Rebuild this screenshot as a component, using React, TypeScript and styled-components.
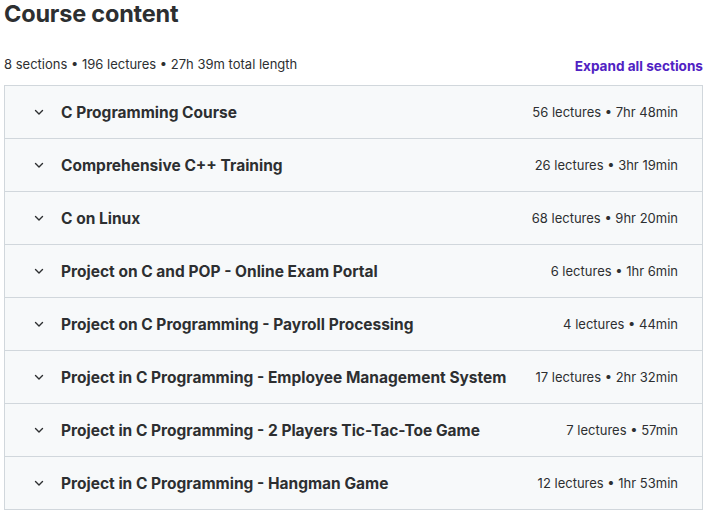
import React from "react";
import styled, { createGlobalStyle } from "styled-components";

const Global = createGlobalStyle`
  html, body { margin: 0; padding: 0; background: #ffffff; }
  body { font-family: Inter, "Noto Sans", sans-serif; color: #2d2f31; }
`;

const Page = styled.div`
  padding: 0 6px 0 4px;
`;

const Heading = styled.h2`
  margin: 0;
  font-size: 23.5px;
  line-height: 28px;
  font-weight: 700;
  letter-spacing: -0.2px;
  color: #2d2f31;
`;

const StatsBar = styled.div`
  display: flex;
  justify-content: space-between;
  align-items: center;
  margin-top: 24px;
  margin-bottom: 9px;
  height: 24px;
`;

const Stats = styled.span`
  font-size: 13px;
  color: #2d2f31;
`;

const ExpandLink = styled.button`
  border: none;
  background: none;
  padding: 0;
  margin-top: 3px;
  font-family: inherit;
  font-size: 13.6px;
  font-weight: 700;
  color: #5022c3;
  cursor: pointer;
`;

const List = styled.div`
  border: 1px solid #d1d7dc;
  border-bottom: none;
`;

const Row = styled.div`
  display: flex;
  align-items: center;
  height: 52px;
  padding: 0 24px 0 28px;
  background: #f7f9fa;
  border-bottom: 1px solid #d1d7dc;
`;

const Chevron = styled.span`
  display: flex;
  width: 12px;
  height: 12px;
  margin-right: 16px;
  color: #2d2f31;
`;

const Title = styled.span`
  flex: 1;
  font-size: 15.5px;
  font-weight: 700;
  color: #2d2f31;
`;

const Meta = styled.span`
  font-size: 13px;
  color: #2d2f31;
`;

const sections = [
  ["C Programming Course", "56 lectures • 7hr 48min"],
  ["Comprehensive C++ Training", "26 lectures • 3hr 19min"],
  ["C on Linux", "68 lectures • 9hr 20min"],
  ["Project on C and POP - Online Exam Portal", "6 lectures • 1hr 6min"],
  ["Project on C Programming - Payroll Processing", "4 lectures • 44min"],
  ["Project in C Programming - Employee Management System", "17 lectures • 2hr 32min"],
  ["Project in C Programming - 2 Players Tic-Tac-Toe Game", "7 lectures • 57min"],
  ["Project in C Programming - Hangman Game", "12 lectures • 1hr 53min"],
];

export default function App() {
  return (
    <>
      <Global />
      <Page>
        <Heading>Course content</Heading>
        <StatsBar>
          <Stats>8 sections • 196 lectures • 27h 39m total length</Stats>
          <ExpandLink>Expand all sections</ExpandLink>
        </StatsBar>
        <List>
          {sections.map(([t, m]) => (
            <Row key={t}>
              <Chevron>
                <svg viewBox="0 0 12 12" width="12" height="12" fill="none" stroke="currentColor" strokeWidth="1.4" strokeLinecap="round" strokeLinejoin="round">
                  <path d="M2.5 4.5 L6 8 L9.5 4.5" />
                </svg>
              </Chevron>
              <Title>{t}</Title>
              <Meta>{m}</Meta>
            </Row>
          ))}
        </List>
      </Page>
    </>
  );
}
